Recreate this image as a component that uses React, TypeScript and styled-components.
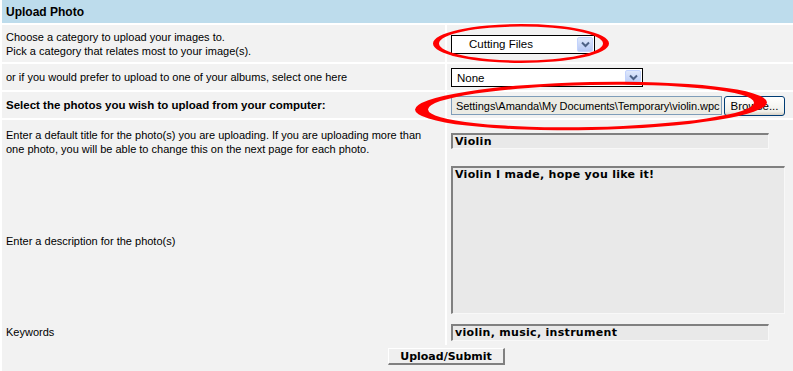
import React from "react";
import styled, { createGlobalStyle } from "styled-components";

const GlobalStyle = createGlobalStyle`
  html, body { margin: 0; padding: 0; background: #ffffff; }
  body { font-family: "Liberation Sans", Arial, sans-serif; font-size: 11px; color: #000; }
`;

const Page = styled.div`
  position: relative;
  width: 793px;
  height: 371px;
  overflow: hidden;
  background: #ffffff;
  padding-left: 2px;
  box-sizing: border-box;
`;

const Header = styled.div`
  height: 23px;
  line-height: 24px;
  background: #bddcec;
  padding-left: 4px;
  font-weight: bold;
  font-size: 12px;
  margin-bottom: 2px;
`;

const Row = styled.div<{ $h: number; $gap?: number }>`
  display: grid;
  grid-template-columns: 443px 1fr;
  column-gap: 2px;
  height: ${(p) => p.$h}px;
  margin-bottom: ${(p) => p.$gap ?? 0}px;
`;

const LabelCell = styled.div<{ $bold?: boolean }>`
  background: #f2f2f2;
  display: flex;
  align-items: center;
  padding-left: 4px;
  line-height: 14px;
  font-weight: ${(p) => (p.$bold ? "bold" : "normal")};
  font-size: ${(p) => (p.$bold ? "11.5px" : "11px")};
`;

const FieldCell = styled.div<{ $top?: number }>`
  background: #f2f2f2;
  display: flex;
  align-items: ${(p) => (p.$top !== undefined ? "flex-start" : "center")};
  padding-left: 4px;
  padding-top: ${(p) => p.$top ?? 0}px;
  box-sizing: border-box;
`;

const Select = styled.div<{ $w: number; $indent: number }>`
  width: ${(p) => p.$w}px;
  height: 19px;
  box-sizing: border-box;
  border: 1px solid #000;
  background: #fff;
  display: flex;
  align-items: center;
  padding-left: ${(p) => p.$indent}px;
  font-size: 11.5px;
  margin-top: 1px;
`;

const SelectText = styled.span`
  flex: 1;
`;

const ArrowBtn = styled.div`
  width: 16px;
  height: 15px;
  margin-right: 1px;
  border-radius: 2px;
  background: linear-gradient(#dfe8fb, #b6c8f4);
  border: 1px solid #c3d3fd;
  box-sizing: border-box;
  display: flex;
  align-items: center;
  justify-content: center;
`;

const FileWrap = styled.div`
  display: flex;
  align-items: center;
  gap: 2px;
  margin-top: 1px;
`;

const FilePath = styled.div`
  width: 271px;
  height: 19px;
  box-sizing: border-box;
  border: 1px solid #7f9db9;
  background: #ebebe4;
  display: flex;
  align-items: center;
  padding-left: 4px;
  font-size: 11px;
  letter-spacing: -0.05px;
  white-space: nowrap;
  overflow: hidden;
`;

const BrowseBtn = styled.div`
  width: 61px;
  height: 20px;
  box-sizing: border-box;
  border: 1px solid #003c74;
  border-radius: 3px;
  background: linear-gradient(#ffffff, #f0f0ea 80%, #d6d0c5);
  display: flex;
  align-items: center;
  justify-content: center;
  font-size: 11.5px;
`;

const TextInput = styled.div<{ $w: number; $h: number }>`
  width: ${(p) => p.$w}px;
  height: ${(p) => p.$h}px;
  box-sizing: border-box;
  background: #e9e9e9;
  border-top: 2px solid #808080;
  border-left: 2px solid #808080;
  border-right: 1px solid #f8f8f8;
  border-bottom: 1px solid #f8f8f8;
  padding: 0 2px;
  font-family: "DejaVu Sans", Verdana, sans-serif;
  font-weight: bold;
  font-size: 11px;
  letter-spacing: 0.3px;
  line-height: 13px;
  white-space: pre-wrap;
  color: #000;
`;

const SubmitRow = styled.div`
  background: #f2f2f2;
  height: 26px;
  padding-left: 386px;
  padding-top: 3px;
  box-sizing: border-box;
`;

const SubmitBtn = styled.div`
  width: 117px;
  height: 17px;
  box-sizing: border-box;
  background: #efefef;
  border-top: 1px solid #ffffff;
  border-left: 1px solid #ffffff;
  border-right: 2px solid #808080;
  border-bottom: 2px solid #808080;
  display: flex;
  align-items: center;
  justify-content: center;
  font-family: "DejaVu Sans", Verdana, sans-serif;
  font-weight: bold;
  font-size: 11px;
`;

const Overlay = styled.svg`
  position: absolute;
  left: 0;
  top: 0;
  pointer-events: none;
`;

function ringPath(cx: number, cy: number, rx: number, ry: number, irx: number, iry: number) {
  const outer = `M${cx - rx},${cy} a${rx},${ry} 0 1,0 ${2 * rx},0 a${rx},${ry} 0 1,0 ${-2 * rx},0 Z`;
  const inner = `M${cx - irx},${cy} a${irx},${iry} 0 1,0 ${2 * irx},0 a${irx},${iry} 0 1,0 ${-2 * irx},0 Z`;
  return outer + " " + inner;
}

const Chevron = () => (
  <svg width="9" height="7" viewBox="0 0 9 7">
    <path d="M1 1.5 L4.5 5 L8 1.5" fill="none" stroke="#4d6185" strokeWidth="2" />
  </svg>
);

export default function App() {
  return (
    <>
      <GlobalStyle />
      <Page>
        <Header>Upload Photo</Header>
        <Row $h={37} $gap={2}>
          <LabelCell>
            Choose a category to upload your images to.
            <br />
            Pick a category that relates most to your image(s).
          </LabelCell>
          <FieldCell>
            <Select $w={144} $indent={17}>
              <SelectText>Cutting Files</SelectText>
              <ArrowBtn>
                <Chevron />
              </ArrowBtn>
            </Select>
          </FieldCell>
        </Row>
        <Row $h={26} $gap={2}>
          <LabelCell>or if you would prefer to upload to one of your albums, select one here</LabelCell>
          <FieldCell>
            <Select $w={192} $indent={5}>
              <SelectText>None</SelectText>
              <ArrowBtn>
                <Chevron />
              </ArrowBtn>
            </Select>
          </FieldCell>
        </Row>
        <Row $h={26} $gap={2}>
          <LabelCell $bold>Select the photos you wish to upload from your computer:</LabelCell>
          <FieldCell>
            <FileWrap>
              <FilePath>Settings\Amanda\My Documents\Temporary\violin.wpc</FilePath>
              <BrowseBtn>Browse...</BrowseBtn>
            </FileWrap>
          </FieldCell>
        </Row>
        <Row $h={44}>
          <LabelCell>
            Enter a default title for the photo(s) you are uploading. If you are uploading more than
            <br />
            one photo, you will be able to change this on the next page for each photo.
          </LabelCell>
          <FieldCell $top={13}>
            <TextInput $w={318} $h={16}>Violin</TextInput>
          </FieldCell>
        </Row>
        <Row $h={154}>
          <LabelCell>Enter a description for the photo(s)</LabelCell>
          <FieldCell $top={2}>
            <TextInput $w={334} $h={148}>Violin I made, hope you like it!</TextInput>
          </FieldCell>
        </Row>
        <Row $h={27}>
          <LabelCell>Keywords</LabelCell>
          <FieldCell $top={6}>
            <TextInput $w={318} $h={17}>violin, music, instrument</TextInput>
          </FieldCell>
        </Row>
        <SubmitRow>
          <SubmitBtn>Upload/Submit</SubmitBtn>
        </SubmitRow>
        <Overlay width={793} height={371} viewBox="0 0 793 371">
          <path d={ringPath(521, 43.5, 88, 19.5, 82, 17)} fill="#ff0000" fillRule="evenodd" />
          <g transform="rotate(-1.2 591 106)">
            <path d={ringPath(591, 106, 176, 24, 163, 21)} fill="#ff0000" fillRule="evenodd" />
          </g>
        </Overlay>
      </Page>
    </>
  );
}
